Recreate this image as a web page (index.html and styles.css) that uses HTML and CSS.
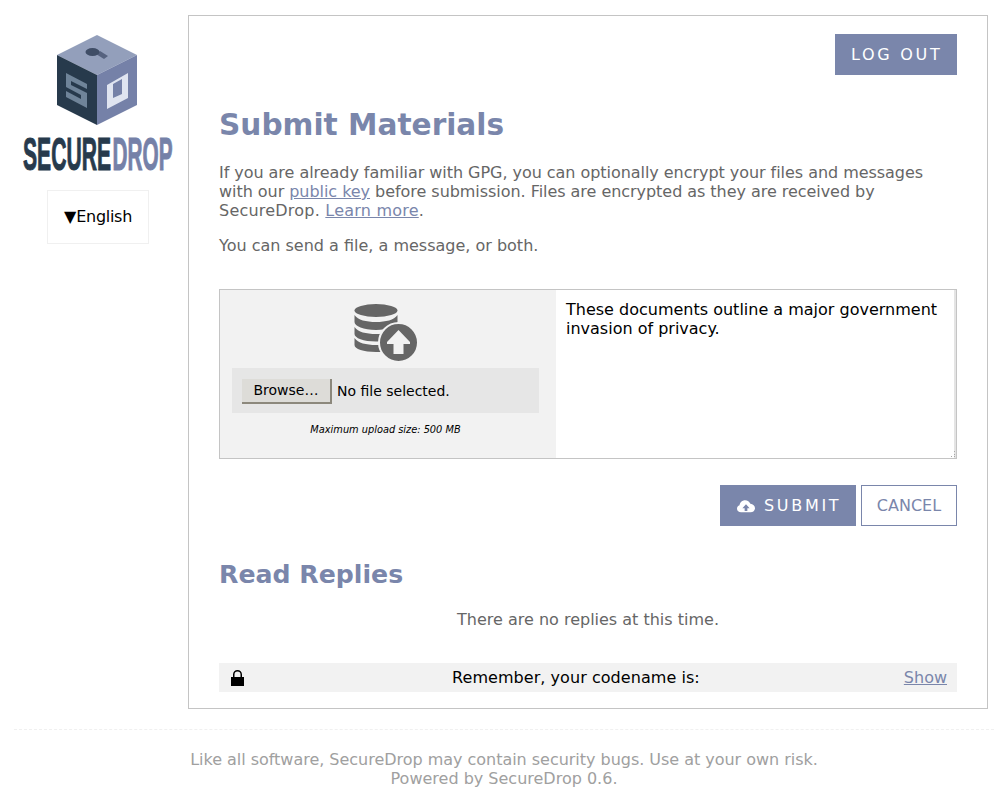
FILE: index.html
```html
<!DOCTYPE html>
<html lang="en">
<head>
<meta charset="utf-8">
<title>SecureDrop</title>
<link rel="stylesheet" href="styles.css">
</head>
<body>
<div class="layout">
  <aside class="sidebar">
    <svg class="logo" viewBox="0 0 152 140" width="152" height="140" aria-label="SecureDrop">
      <polygon points="76,0 116,20 76,40 36,20" fill="#939fbb"/>
      <polygon points="36,20 76,40 76,90 36,70" fill="#273a4c"/>
      <polygon points="76,40 116,20 116,70 76,90" fill="#7581a8"/>
      <polygon points="75,19 79,16 87,21 83,24" fill="#56627f"/>
      <ellipse cx="71.500" cy="17" rx="7" ry="4" fill="#3f4d66"/>
      <path fill="#6f8499" fill-rule="evenodd" d="M45 38 66 49V73L45 62ZM50 46V50L66 58V54ZM45 52V56L60 64V60Z"/>
      <path fill="#dfe4f0" fill-rule="evenodd" d="M86 50 107 38V63L86 74ZM92 49V63L101 59V44Z"/>
      <text class="logo-text logo-secure" x="2" y="135" textLength="88" lengthAdjust="spacingAndGlyphs">SECURE</text>
      <text class="logo-text logo-drop" x="91.500" y="135" textLength="60" lengthAdjust="spacingAndGlyphs">DROP</text>
    </svg>
    <div class="locale"><span class="caret">▼</span><span class="locale-name">English</span></div>
  </aside>
  <main class="panel">
    <div class="logout-row"><a class="btn btn-primary btn-logout" href="#">LOG OUT</a></div>
    <h1>Submit Materials</h1>
    <p class="intro">If you are already familiar with GPG, you can optionally encrypt your files and messages with our <a href="#">public key</a> before submission. Files are encrypted as they are received by <span class="intro-end">SecureDrop. <a href="#">Learn more</a>.</span></p>
    <p class="intro-2">You can send a file, a message, or both.</p>
    <form class="submit-box">
      <div class="upload">
        <svg class="upload-icon" viewBox="0 0 64 60" width="64" height="60">
          <g fill="#666">
            <ellipse cx="22" cy="7.500" rx="21.500" ry="6.500"/>
            <path d="M.5 12C4 17 12 19 22 19s18-2 21.500-7v7c0 4-9 8-21.500 8S.5 23 .5 19Z"/>
            <path d="M.5 24C4 29 12 31 22 31c4 0 8-.3 11-1l-4 8c-2 .3-5 .5-7 .5C9.500 38.500.5 35 .5 31Z"/>
            <path d="M.5 35C4 40 12 42 22 42h4l1 7h-5C9.500 49 .5 46 .5 42Z"/>
          </g>
          <circle cx="44.500" cy="39.500" r="19.500" fill="#666" stroke="#f2f2f2" stroke-width="2"/>
          <path fill="#f2f2f2" d="M44.500 27 56 39V41H49.500V51H39.500V41H33V39Z"/>
        </svg>
        <div class="file-row">
          <button class="browse" type="button">Browse…</button>
          <span class="file-label">No file selected.</span>
        </div>
        <p class="max-size">Maximum upload size: 500 MB</p>
      </div>
      <div class="message-wrap">
        <textarea class="message">These documents outline a major government invasion of privacy.</textarea>
        <svg class="grip" viewBox="0 0 6 7" width="6" height="7"><path fill="#a8a8a8" d="M4 0h1v1H4ZM4 3h1v1H4ZM1 5h1v1H1ZM4 5h1v1H4Z"/></svg>
      </div>
    </form>
    <div class="actions">
      <a class="btn btn-primary btn-submit" href="#">
        <svg class="cloud" viewBox="0 0 20 15" width="18" height="14"><path fill="#fff" fill-rule="evenodd" d="M4.500 14.500C2 14.500 0 12.800 0 10.500 0 8.700 1.100 7.300 2.800 6.800 3 3.500 5.800 1 9 1c2.700 0 5 1.600 5.900 4 2.800.1 5.100 2.400 5.100 5 0 2.600-2.200 4.500-5 4.500ZM10 5.500 6 10h2.500v3h3v-3H14Z"/></svg>SUBMIT</a>
      <a class="btn btn-outline" href="#">CANCEL</a>
    </div>
    <h2>Read Replies</h2>
    <p class="no-replies">There are no replies at this time.</p>
    <div class="codename">
      <svg class="lock" viewBox="0 0 13 17" width="13" height="17"><path fill-rule="evenodd" d="M0 8H2V5.500A4.500 4.500 0 0 1 11 5.500V8H13V17H0ZM3.500 8H9.500V5.500A3 3 0 0 0 3.500 5.500Z"/></svg>
      <span class="codename-text">Remember, your codename is:</span>
      <a href="#">Show</a>
    </div>
  </main>
</div>
<footer class="footer">
  <p class="footer-note">Like all software, SecureDrop may contain security bugs. Use at your own risk.</p>
  <p>Powered by SecureDrop 0.6.</p>
</footer>
</body>
</html>
```
FILE: styles.css
```css
* { box-sizing: border-box; }
html, body { margin: 0; padding: 0; }
body {
  font-family: "DejaVu Sans", sans-serif;
  font-size: 16px;
  line-height: 19px;
  color: #666;
  background: #fff;
}
a { color: #7a86ab; }
p { margin: 0; }
.layout {
  display: flex;
  align-items: flex-start;
  padding: 15px 20px 0 0;
}
.sidebar {
  width: 188px;
  flex: none;
  display: flex;
  flex-direction: column;
  align-items: center;
  padding-top: 20px;
}
.logo { display: block; margin-left: 6px; overflow: visible; }
.logo-text {
  font-family: "Liberation Sans Narrow", "Liberation Sans", sans-serif;
  font-weight: 700;
  font-size: 47px;
  stroke-width: 1.100px;
}
.logo-secure { fill: #273a4c; stroke: #273a4c; }
.logo-drop { fill: #7581a8; stroke: #7581a8; }
.locale {
  width: 102px;
  height: 54px;
  margin-top: 15px;
  margin-left: 8px;
  padding-bottom: 1px;
  border: 1px solid #f0f0f0;
  display: flex;
  align-items: center;
  justify-content: center;
  color: #000;
}
.locale-name { letter-spacing: -0.300px; }
.panel {
  flex: 1;
  height: 694px;
  border: 1px solid #c4c4c4;
  padding: 18px 30px 0;
}
.logout-row { display: flex; justify-content: flex-end; }
.btn {
  display: inline-flex;
  align-items: center;
  height: 41px;
  text-decoration: none;
  font-size: 16px;
}
.btn-primary {
  background: #7a86ab;
  color: #fff;
  letter-spacing: 2.700px;
  padding-left: 16px;
}
.btn-logout { width: 122px; }
.btn-submit { width: 136px; padding-left: 17px; }
.btn-outline {
  background: #fff;
  color: #7a86ab;
  border: 1px solid #7a86ab;
  width: 96px;
  justify-content: center;
}
h1 {
  margin: 31px 0 0;
  font-size: 29.600px;
  line-height: 38px;
  font-weight: 700;
  color: #7a86ab;
}
.intro { margin-top: 19px; letter-spacing: -0.045px; }
.intro-end { letter-spacing: 0.220px; }
.intro-2 { margin-top: 16px; }
.submit-box {
  display: flex;
  margin-top: 34px;
  height: 170px;
  border: 1px solid #c4c4c4;
}
.upload {
  width: 336px;
  flex: none;
  background: #f2f2f2;
  display: flex;
  flex-direction: column;
  align-items: center;
  padding: 13px 17px 0 12px;
}
.upload-icon { display: block; }
.file-row {
  align-self: stretch;
  height: 45px;
  margin-top: 5px;
  background: #e6e6e6;
  display: flex;
  align-items: center;
  padding: 1px 0 0 10px;
  font-size: 14px;
  color: #000;
}
.browse {
  font: inherit;
  height: 25px;
  width: 90px;
  padding: 0;
  margin-right: 5px;
  color: #000;
  background: #dddcd8;
  border: 0;
  border-right: 2px solid #8c887c;
  border-bottom: 2px solid #8c887c;
}
.max-size {
  font-size: 9.800px;
  line-height: 13px;
  font-style: italic;
  color: #000;
  margin-top: 10px;
}
.message-wrap {
  flex: 1;
  position: relative;
  display: flex;
}
.message {
  flex: 1;
  display: block;
  margin: 0;
  padding: 10px;
  border: 0;
  border-right: 2px solid #e4e4e4;
  font: inherit;
  color: #000;
  background: #fff;
  resize: none;
  outline: 0;
}
.grip {
  position: absolute;
  right: 0;
  bottom: 0;
}
.actions {
  display: flex;
  justify-content: flex-end;
  gap: 5px;
  margin-top: 26px;
}
.cloud { margin-right: 9px; }
h2 {
  margin: 33px 0 0;
  font-size: 25.200px;
  line-height: 32px;
  font-weight: 700;
  color: #7a86ab;
}
.no-replies { margin-top: 19px; text-align: center; }
.codename {
  display: flex;
  align-items: center;
  height: 29px;
  margin-top: 34px;
  padding: 0 10px 0 12px;
  background: #f2f2f2;
  color: #000;
}
.lock { flex: none; }
.codename-text { flex: 1; text-align: center; letter-spacing: 0.050px; padding-left: 4px; }
.footer {
  margin: 20px 14px 0;
  padding-top: 20px;
  border-top: 1px dashed #f0f0f0;
  text-align: center;
  color: #a0a0a0;
}
.footer-note { letter-spacing: -0.025px; }
```
